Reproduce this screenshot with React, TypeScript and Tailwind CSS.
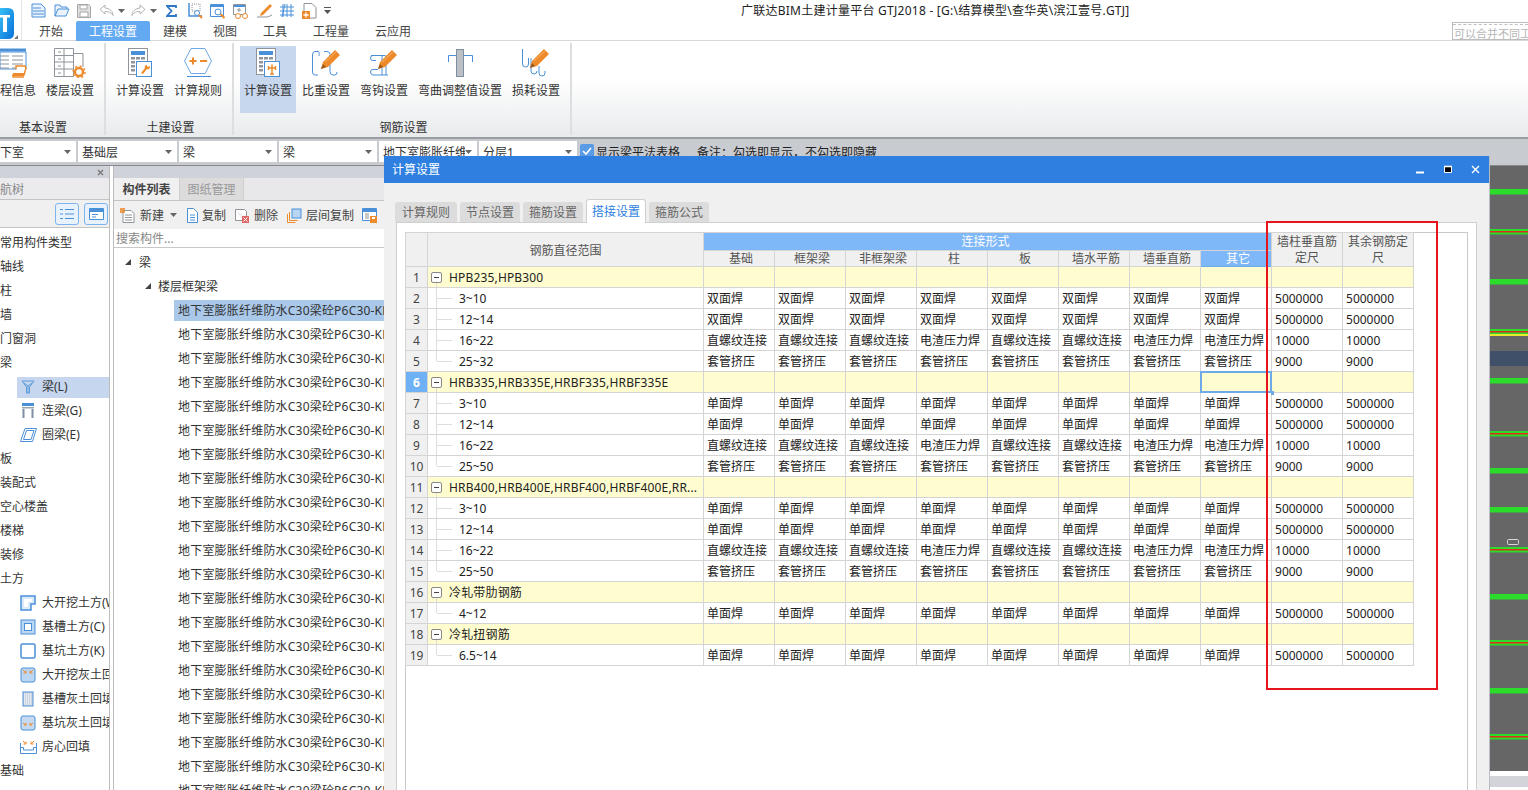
import React from "react";

const BLUE = "#4a90d9";
const ORANGE = "#ed8a2c";
const GRAY = "#8e9499";

const Svg = ({ w, h, children, className }: { w: number; h: number; children: React.ReactNode; className?: string }) => (
  <svg width={w} height={h} viewBox={`0 0 ${w} ${h}`} fill="none" className={`shrink-0 ${className ?? ""}`}>
    {children}
  </svg>
);

const Caret = ({ className }: { className?: string }) => (
  <svg width="7" height="4" viewBox="0 0 7 4" className={`shrink-0 ${className ?? ""}`}>
    <path d="M0 0h7L3.500 4z" fill="#666" />
  </svg>
);

const Pen = ({ x, y }: { x: number; y: number }) => (
  <g transform={`translate(${x} ${y})`}>
    <path d="M0 20l2-7L14 1l5 5L7 18z" fill={ORANGE} />
    <path d="M4 13L15 3" stroke="#f7b36b" strokeWidth="1" />
    <path d="M0 20l2-5 3 3z" fill="#9a5a1c" />
  </g>
);

const CalcBase = ({ children }: { children: React.ReactNode }) => (
  <Svg w={25} h={30}>
    <rect x="0.500" y="0.500" width="19" height="26" fill="#fff" stroke={GRAY} />
    <rect x="3" y="3" width="14" height="4" fill={BLUE} />
    {[9, 13, 17, 21].map((y) =>
      [3, 8, 13].map((x) => <rect key={`${x}-${y}`} x={x} y={y} width="4" height="2.500" fill={GRAY} />),
    )}
    <rect x="8.500" y="13.500" width="15" height="15" fill="#fff" stroke={BLUE} />
    {children}
  </Svg>
);

const quickIcons: React.ReactNode[] = [
  <Svg key="new" w={15} h={15} className="ml-0">
    <path d="M1 1h9l4 4v9H1zM2 5h8M2 8h11M2 11h11" stroke={BLUE} fill="#eaf3fc" />
  </Svg>,
  <Svg key="open" w={16} h={15} className="ml-2">
    <path d="M1 13V2h5l1 2h6v2M1 13l3-7h11l-3 7z" stroke={BLUE} fill="#eaf3fc" />
  </Svg>,
  <Svg key="save" w={14} h={14} className="ml-[7px]">
    <path d="M.5.500h11l2 2v11H.5z" stroke="#a6a6a6" fill="#e2e2e2" />
    <path d="M3 1h7v4H3zM3 8h8v5H3z" fill="#fff" stroke="#a6a6a6" />
  </Svg>,
  <Svg key="undo" w={15} h={13} className="ml-2">
    <path d="M6 1L1 5.500 6 10V7.500c3 0 6 .5 8 4 0-4-3-7-8-7.500z" stroke="#b0b0b0" />
  </Svg>,
  <Caret key="c1" className="ml-[4px]" />,
  <Svg key="redo" w={15} h={13} className="ml-[6px]">
    <path d="M9 1l5 4.500L9 10V7.500c-3 0-6 .5-8 4 0-4 3-7 8-7.500z" stroke="#b0b0b0" />
  </Svg>,
  <Caret key="c2" className="ml-[4px]" />,
  <Svg key="sum" w={11} h={12} className="ml-[9px]">
    <path d="M10 3V1H1l4.500 5L1 11h9V9" stroke="#2f78c4" strokeWidth="1.800" />
  </Svg>,
  <Svg key="pick" w={16} h={16} className="ml-[10px]">
    <path d="M2 0v13h13" stroke={BLUE} strokeWidth="1.500" />
    <path d="M5 1h8v7H5z" stroke={GRAY} strokeDasharray="1 1" />
    <circle cx="10" cy="10" r="2.500" stroke={BLUE} fill="#fff" />
    <path d="M12 12l3 3" stroke={ORANGE} strokeWidth="2" />
  </Svg>,
  <Svg key="view" w={16} h={16} className="ml-[7px]">
    <path d="M.5 1.500h13v12H.5z" stroke={BLUE} fill="#fff" />
    <path d="M1 2h12v2H1z" fill={BLUE} />
    <circle cx="8" cy="9" r="3" stroke={BLUE} />
    <path d="M10.500 11l4 4" stroke={ORANGE} strokeWidth="2" />
  </Svg>,
  <Svg key="glasses" w={16} h={16} className="ml-[7px]">
    <path d="M.5 1.500h12v10H.5z" stroke={GRAY} fill="#fff" />
    <path d="M1 2h11v2H1z" fill={BLUE} />
    <path d="M4 7h4M6 5v4" stroke={GRAY} />
    <circle cx="5" cy="13" r="2.500" stroke={ORANGE} fill="#fff" />
    <circle cx="12" cy="13" r="2.500" stroke={ORANGE} fill="#fff" />
  </Svg>,
  <Svg key="pen" w={16} h={15} className="ml-2">
    <path d="M4 10l9-9 2 2-9 9-3 1z" fill={ORANGE} />
    <path d="M0 14h9c2 0 4-1 6-2" stroke={GRAY} />
  </Svg>,
  <Svg key="grid" w={16} h={15} className="ml-[6px]">
    <path d="M4 1v13M8 1v13M12 1v13M1 4h14M1 8h14M1 12h14M3 14L6 1" stroke={BLUE} />
  </Svg>,
  <Svg key="add" w={15} h={16} className="ml-[7px]">
    <path d="M2 8V.5h8l4 4V15H8" stroke={GRAY} />
    <rect x="0" y="8" width="8" height="8" fill={ORANGE} />
    <path d="M4 9.500v5M1.500 12h5" stroke="#fff" strokeWidth="1.300" />
  </Svg>,
  <Svg key="more" w={7} h={7} className="ml-[7px]">
    <path d="M0 .5h7" stroke="#555" />
    <path d="M0 3h7L3.500 7z" fill="#555" />
  </Svg>,
];

const tabs = ["开始", "工程设置", "建模", "视图", "工具", "工程量", "云应用"];

const InfoIcon = () => (
  <Svg w={30} h={30}>
    <path d="M0 .5h26v3H0z" fill={BLUE} />
    <path d="M0 4h26v17H0z" fill="#fff" stroke={BLUE} />
    {[8, 12, 16, 20].map((y) => (
      <path key={y} d={`M0 ${y}h9M12 ${y}h11`} stroke={GRAY} />
    ))}
    <path d="M16 21v-3h9l1 2-2 7H13v2h11" fill="#fff" stroke={ORANGE} strokeWidth="1.500" />
    <rect x="13" y="25" width="11" height="3" fill={ORANGE} />
  </Svg>
);

const FloorIcon = () => (
  <Svg w={32} h={30}>
    <path d="M.5.500h19v28H.5zM10 .5v28M.5 7.500h19M.5 14h19M.5 21h19M4 4h3M4 11h3M4 18h3M4 25h3" stroke={GRAY} />
    <path d="M20 5.500h9V19" stroke={GRAY} />
    <circle cx="25" cy="24" r="4" stroke={ORANGE} strokeWidth="2.400" />
    <circle cx="25" cy="24" r="6" stroke={ORANGE} strokeWidth="1.400" strokeDasharray="2 2.700" />
  </Svg>
);

const HexIcon = () => (
  <Svg w={28} h={30}>
    <path d="M7 .5h14l6.500 12.500L21 25.500H7L.5 13z" fill="#fff" stroke="#6fa8e6" />
    <path d="M5.500 13h7M9 9.500v7M16 13h7" stroke={ORANGE} strokeWidth="2" />
    <path d="M3 28.500h24" stroke={BLUE} />
  </Svg>
);

const DensityIcon = () => (
  <Svg w={29} h={30}>
    <path d="M6 3.500H3Q.5 3.500.5 7v17Q.5 27 3 27h3M5 3c3 0 2 3 2 5M12 3.500h3q3 0 3 3v17q0 3.500 3 3.500h2q2 0 2-3" stroke={BLUE} />
    <Pen x={9} y={1} />
  </Svg>
);

const HookIcon = () => (
  <Svg w={29} h={30}>
    <path d="M8 7.500H3Q.5 7.500.5 10T3 12.500h3M8 21.500H3Q.5 21.500.5 24T3 27H18M1 7.500h14M12 7v20M16 7v20" stroke={BLUE} />
    <Pen x={8} y={1} />
  </Svg>
);

const BendIcon = () => (
  <Svg w={25} h={30}>
    <path d="M.5 14V7.500h24V14" stroke={BLUE} />
    <rect x="8.500" y="1.500" width="7" height="27" fill="#bcc0c4" stroke="#7d8fa3" />
  </Svg>
);

const LossIcon = () => (
  <Svg w={29} h={30}>
    <path d="M.5 1v15q0 3 3 3t3-3V10M9 10v13q0 3 3 3t3-3M17 18v7q0 3 3 3t3-3v-2" stroke={BLUE} />
    <Pen x={8} y={0} />
  </Svg>
);

const ribbonGroups = [
  {
    width: "w-[106px]",
    pad: "pl-0",
    label: "基本设置",
    labelPad: "pl-[19px]",
    center: false,
    buttons: [
      { icon: <InfoIcon />, text: "程信息", width: "w-[40px]", first: true },
      { icon: <FloorIcon />, text: "楼层设置", width: "w-[56px]" },
    ],
  },
  {
    width: "w-[128px]",
    pad: "pl-[6px]",
    label: "土建设置",
    labelPad: "pl-[3px]",
    center: true,
    buttons: [
      {
        icon: (
          <CalcBase>
            <path d="M19 17c-2 0-3 2-2 3l-4 5 2 1 4-5c2 1 3-1 3-3l-2 1-1-1z" fill={ORANGE} />
          </CalcBase>
        ),
        text: "计算设置",
        width: "w-[56px]",
      },
      { icon: <HexIcon />, text: "计算规则", width: "w-[56px]" },
    ],
  },
  {
    width: "w-[338px]",
    pad: "pl-[6px]",
    label: "钢筋设置",
    labelPad: "pl-[3px]",
    center: true,
    buttons: [
      {
        icon: (
          <CalcBase>
            <path d="M16 16.500v10M12 20h8M12.500 18v4M19.500 18v4M14 26h4" stroke={ORANGE} strokeWidth="1.500" />
          </CalcBase>
        ),
        text: "计算设置",
        width: "w-[56px]",
        active: true,
      },
      { icon: <DensityIcon />, text: "比重设置", width: "w-[56px]" },
      { icon: <HookIcon />, text: "弯钩设置", width: "w-[56px]" },
      { icon: <BendIcon />, text: "弯曲调整值设置", width: "w-[92px]" },
      { icon: <LossIcon />, text: "损耗设置", width: "w-[56px]" },
    ],
  },
];

const selects = [
  { text: "下室", w: "w-[76px]", gap: "" },
  { text: "基础层", w: "w-[99px]", gap: "ml-[2px]" },
  { text: "梁", w: "w-[98px]", gap: "ml-[2px]" },
  { text: "梁", w: "w-[98px]", gap: "ml-[2px]" },
  { text: "地下室膨胀纤维", w: "w-[98px]", gap: "ml-[2px]" },
  { text: "分层1", w: "w-[98px]", gap: "ml-[2px]" },
];

const FunnelIcon = () => (
  <Svg w={14} h={14}>
    <path d="M1 1h12L8.500 7v6h-3V7zM3 3l4 3 4-3M7 6v7" stroke="#5b9bd9" />
  </Svg>
);

const GateIcon = () => (
  <Svg w={14} h={16}>
    <rect x="1" y="0" width="12" height="3" fill={BLUE} />
    <path d="M1 4h12v1.500H1z" fill="#9aa6b2" />
    <path d="M2.500 6v9M11.500 6v9" stroke="#7d8fa3" strokeWidth="2" />
  </Svg>
);

const RingIcon = () => (
  <Svg w={17} h={14}>
    <path d="M5 .5h11.500l-4 13H.5zM6.500 2.500h7.500l-3 9H3.500z" stroke={BLUE} fill="#fff" />
  </Svg>
);

const NotchIcon = () => (
  <Svg w={16} h={16}>
    <path d="M1 1h14v8h-4v6H1z" stroke={BLUE} strokeWidth="1.500" fill="#dbe9f8" />
    <path d="M4 4h8v3H8v5H4z" fill="#fff" />
  </Svg>
);

const TrenchIcon = () => (
  <Svg w={16} h={16}>
    <rect x="1" y="1" width="14" height="14" fill="#bcd7f3" stroke={BLUE} />
    <rect x="4.500" y="4.500" width="7" height="7" fill="#fff" stroke={BLUE} />
  </Svg>
);

const PitIcon = () => (
  <Svg w={16} h={16}>
    <rect x="1" y="1" width="14" height="14" rx="1.500" fill="#fff" stroke={BLUE} strokeWidth="1.500" />
  </Svg>
);

const FillIcon = ({ low }: { low?: boolean }) => (
  <Svg w={16} h={16}>
    <rect x="1" y="1" width="14" height="14" rx="2" fill={low ? "#c5d9f0" : "#bcd7f3"} stroke={BLUE} />
    <path
      d={low ? "M3 8l3 2M6 8v2H4M13 8l-3 2M10 8v2h2" : "M3 3l3 3M6 3.500V6H3.500M13 3l-3 3M10 3.500V6h2.500"}
      stroke={ORANGE}
    />
  </Svg>
);

const HatchIcon = () => (
  <Svg w={12} h={16}>
    <rect x="1" y="1" width="10" height="14" fill="#cbd5e0" stroke={BLUE} />
    <path d="M2 3h8M2 5h8M2 7h8M2 9h8M2 11h8M2 13h8" stroke="#fff" strokeDasharray="1 1" />
  </Svg>
);

const TrayIcon = () => (
  <Svg w={17} h={14}>
    <path d="M.5 3v10.500h16V3M.5 7.500h3v2.500h10V7.500h3" stroke={BLUE} />
    <path d="M3 1l3 3M6 1.500V4H3.500M14 1l-3 3M11 1.500V4h2.500" stroke={ORANGE} />
  </Svg>
);

type NavItem = { text: string; icon?: React.ReactNode; active?: boolean };

const navItems: NavItem[] = [
  { text: "常用构件类型" },
  { text: "轴线" },
  { text: "柱" },
  { text: "墙" },
  { text: "门窗洞" },
  { text: "梁" },
  { text: "梁(L)", icon: <FunnelIcon />, active: true },
  { text: "连梁(G)", icon: <GateIcon /> },
  { text: "圈梁(E)", icon: <RingIcon /> },
  { text: "板" },
  { text: "装配式" },
  { text: "空心楼盖" },
  { text: "楼梯" },
  { text: "装修" },
  { text: "土方" },
  { text: "大开挖土方(W)", icon: <NotchIcon /> },
  { text: "基槽土方(C)", icon: <TrenchIcon /> },
  { text: "基坑土方(K)", icon: <PitIcon /> },
  { text: "大开挖灰土回填", icon: <FillIcon /> },
  { text: "基槽灰土回填", icon: <HatchIcon /> },
  { text: "基坑灰土回填", icon: <FillIcon low /> },
  { text: "房心回填", icon: <TrayIcon /> },
  { text: "基础" },
];

const Triangle = () => (
  <svg width="6" height="6" viewBox="0 0 6 6" className="shrink-0">
    <path d="M6 0v6H0z" fill="#444" />
  </svg>
);

const dialogTabs = ["计算规则", "节点设置", "箍筋设置", "搭接设置", "箍筋公式"];
const columns = ["基础", "框架梁", "非框架梁", "柱", "板", "墙水平筋", "墙垂直筋", "其它"];

const pressure = ["直螺纹连接", "直螺纹连接", "直螺纹连接", "电渣压力焊", "直螺纹连接", "直螺纹连接", "电渣压力焊", "电渣压力焊"];
const same = (text: string) => Array<string>(8).fill(text);

type Row = { label: string; group?: boolean; last?: boolean; cells?: string[]; len?: string };

const rebarRows = (weld: string, top: string): Row[] => [
  { label: "3~10", cells: same(weld), len: "5000000" },
  { label: "12~14", cells: same(weld), len: "5000000" },
  { label: "16~22", cells: pressure, len: "10000" },
  { label: top, cells: same("套管挤压"), len: "9000", last: true },
];

const rows: Row[] = [
  { label: "HPB235,HPB300", group: true },
  ...rebarRows("双面焊", "25~32"),
  { label: "HRB335,HRB335E,HRBF335,HRBF335E", group: true },
  ...rebarRows("单面焊", "25~50"),
  { label: "HRB400,HRB400E,HRBF400,HRBF400E,RR...", group: true },
  ...rebarRows("单面焊", "25~50"),
  { label: "冷轧带肋钢筋", group: true },
  { label: "4~12", cells: same("单面焊"), len: "5000000", last: true },
  { label: "冷轧扭钢筋", group: true },
  { label: "6.5~14", cells: same("单面焊"), len: "5000000", last: true },
];

const cellLine = "border border-[#d4d4d4]";

const SettingsTable = () => (
  <table className="table-fixed border-collapse w-[1008px] -ml-px -mt-px text-[12px] text-[#222]">
    <colgroup>
      <col className="w-[22px]" />
      <col className="w-[276px]" />
      {Array.from({ length: 10 }).map((_, i) => (
        <col key={i} className="w-[71px]" />
      ))}
    </colgroup>
    <thead className="text-[#555] font-normal">
      <tr className="h-[18px]">
        <th rowSpan={2} className={`${cellLine} bg-[#f0f0f0] font-normal`} />
        <th rowSpan={2} className={`${cellLine} bg-[#f0f0f0] font-normal pt-[2px] leading-[18px]`}>
          钢筋直径范围
        </th>
        <th colSpan={8} className={`${cellLine} bg-[#7fb8f8] font-normal text-white leading-[16px] pr-[4px]`}>
          连接形式
        </th>
        <th rowSpan={2} className={`${cellLine} bg-[#f0f0f0] font-normal leading-[16px] pt-px`}>
          墙柱垂直筋定尺
        </th>
        <th rowSpan={2} className={`${cellLine} bg-[#f0f0f0] font-normal leading-[16px] pt-px`}>
          其余钢筋定尺
        </th>
      </tr>
      <tr className="h-[16px]">
        {columns.map((c) => (
          <th
            key={c}
            className={`border font-normal leading-[14px] pt-px pl-[4px] ${c === "其它" ? "bg-[#7fb8f8] text-white border-[#6ea9e8]" : "bg-[#f0f0f0] border-[#d4d4d4]"}`}
          >
            {c}
          </th>
        ))}
      </tr>
    </thead>
    <tbody>
      {rows.map((row, i) => {
        const bg = row.group ? "bg-[#fffdcf]" : "bg-white";
        const current = i === 5;
        return (
          <tr key={i} className="h-[21px]">
            <td
              className={`${cellLine} p-0 pt-[2px] leading-[18px] text-center ${current ? "bg-[#6fb1f5] text-white font-bold" : "bg-[#f0f0f0] text-[#444]"}`}
            >
              {i + 1}
            </td>
            <td className={`${cellLine} ${bg} p-0 relative`}>
              {row.group ? (
                <div className="flex items-center whitespace-nowrap overflow-hidden">
                  <span className="ml-[3px] w-[11px] h-[11px] border border-[#888] rounded-[2px] flex items-center justify-center bg-white shrink-0">
                    <span className="w-[5px] h-px bg-[#444]" />
                  </span>
                  <span className="ml-[7px] pt-[2px] leading-[18px] tracking-[0.16px]">{row.label}</span>
                </div>
              ) : (
                <div className="pl-[31px] pt-[2px] leading-[18px]">{row.label}</div>
              )}
              {row.group ? (
                <span className="absolute left-[8px] top-[16px] bottom-0 w-px bg-[#dedede]" />
              ) : (
                <>
                  <span className={`absolute left-[8px] top-0 w-px bg-[#dedede] ${row.last ? "h-[10px]" : "h-full"}`} />
                  <span className="absolute left-[9px] top-[10px] w-[15px] h-px bg-[#dedede]" />
                </>
              )}
            </td>
            {Array.from({ length: 8 }).map((_, c) => (
              <td key={c} className={`${cellLine} ${bg} p-0 pl-[3px] pt-[2px] relative whitespace-nowrap overflow-visible leading-[18px]`}>
                {row.cells?.[c]}
                {current && c === 7 && (
                  <>
                    <span className="absolute -inset-px border-2 border-[#6ea9e8]" />
                    <span className="absolute -right-[3px] -bottom-[3px] w-[4px] h-[4px] bg-[#6ea9e8]" />
                  </>
                )}
              </td>
            ))}
            <td className={`${cellLine} ${bg} p-0 pl-[3px] pt-[2px] leading-[18px]`}>{row.len}</td>
            <td className={`${cellLine} ${bg} p-0 pl-[3px] pt-[2px] leading-[18px]`}>{row.len}</td>
          </tr>
        );
      })}
    </tbody>
  </table>
);

const canvasLines: { y: number; red?: boolean; yellow?: boolean }[] = [
  { y: 188 },
  { y: 228, red: true },
  { y: 278 },
  { y: 328, red: true, yellow: true },
  { y: 377 },
  { y: 430, red: true },
  { y: 467 },
  { y: 506 },
  { y: 546, red: true },
  { y: 593 },
  { y: 639, red: true },
  { y: 687 },
  { y: 733, red: true },
];

const DrawingCanvas = () => (
  <svg width="39" height="605" viewBox="0 165 39 605" className="block">
    <rect x="0" y="165" width="39" height="605" fill="#666" />
    <rect x="0" y="350" width="39" height="15" fill="#3f5068" />
    {canvasLines.map((l) => (
      <g key={l.y}>
        <rect x="0" y={l.y} width="39" height="5.500" fill="#2bdc2b" />
        {l.red && <rect x="0" y={l.y + 2} width="39" height="1.500" fill="#e02a1c" />}
        {l.yellow && <rect x="0" y={l.y + 5} width="39" height="2" fill="#e8e82c" />}
      </g>
    ))}
    <rect x="18.500" y="538.500" width="11" height="5" rx="1" stroke="#d8d8d8" fill="none" />
  </svg>
);

export default function App() {
  return (
    <div className="relative w-[1528px] h-[790px] overflow-hidden bg-white flex flex-col text-[12px] text-[#333] font-['Noto_Sans','Noto_Sans_CJK_SC',sans-serif]">
      {/* title + tabs */}
      <div className="h-[41px] flex border-b border-[#d8d8d8] shrink-0">
        <div className="w-[22px] border-r border-[#e4e4e4] relative shrink-0">
          <svg width="14" height="31" viewBox="0 0 14 31" className="mt-2 block">
            <defs>
              <linearGradient id="logo" x1="0" y1="0" x2="1" y2="1">
                <stop offset="0" stopColor="#35c0f5" />
                <stop offset="1" stopColor="#0a6fd8" />
              </linearGradient>
            </defs>
            <path d="M0 0h8q6 0 6 6v19q0 6-6 6H0z" fill="url(#logo)" />
            <path d="M0 7h10v2.500H7V24H3V9.500H0z" fill="#fff" />
          </svg>
          <svg width="4" height="4" viewBox="0 0 4 4" className="absolute left-[14px] top-[35px]">
            <path d="M4 0v4H0z" fill="#777" />
          </svg>
        </div>
        <div className="flex-1 flex flex-col min-w-0">
          <div className="h-[21px] flex items-center shrink-0">
            <div className="w-[719px] pl-[9px] flex items-center shrink-0">{quickIcons}</div>
            <span className="text-[#222] whitespace-nowrap leading-[20px] tracking-[0.25px]">
              广联达BIM土建计量平台 GTJ2018 - [G:\结算模型\查华英\滨江壹号.GTJ]
            </span>
          </div>
          <div className="flex-1 flex items-stretch pl-[4px]">
            {tabs.map((t) => (
              <div
                key={t}
                className={`px-[13px] pt-[2px] flex items-center rounded-t-[2px] ${t === "工程设置" ? "bg-[#63a9f2] text-white" : "text-[#444]"}`}
              >
                {t}
              </div>
            ))}
            <div className="ml-auto mt-px w-[76px] h-[18px] border-l border-t border-b border-[#bdbdbd] overflow-hidden flex flex-col">
              <span className="h-[2px] mt-px shrink-0 border-t border-dashed border-[#c0c0c0]" />
              <span className="whitespace-nowrap text-[11px] leading-[14px] mt-px text-[#b5b5b5] pl-px">可以合并不同工程</span>
            </div>
          </div>
        </div>
      </div>

      {/* ribbon */}
      <div className="h-[98px] shrink-0 flex items-start pt-[2px] border-b-2 border-[#9a9ea3] bg-linear-to-b from-white from-40% to-[#e8eaec]">
        {ribbonGroups.map((g) => (
          <div key={g.label} className={`${g.width} h-[92px] border-r-2 border-[#dcdee0] flex flex-col shrink-0`}>
            <div className={`flex gap-[2px] pt-[3px] h-[70px] ${g.pad}`}>
              {g.buttons.map((b, i) => (
                <div
                  key={i}
                  className={`${b.width} h-[67px] pt-[2px] flex flex-col shrink-0 ${"first" in b ? "items-start" : "items-center"} ${"active" in b ? "bg-[#c7d7ee]" : ""}`}
                >
                  <div className="h-[30px] flex items-start overflow-hidden">{b.icon}</div>
                  <div className="mt-[4px] leading-[18px] whitespace-nowrap text-[#333]">{b.text}</div>
                </div>
              ))}
            </div>
            <div className={`mt-[6px] leading-[18px] whitespace-nowrap ${g.center ? "text-center" : ""} ${g.labelPad}`}>{g.label}</div>
          </div>
        ))}
      </div>

      {/* floor / type selectors */}
      <div className="h-[26px] shrink-0 bg-[#c8cbd0] flex items-start pt-[2px]">
        {selects.map((s, i) => (
          <div key={i} className={`${s.w} ${s.gap} h-[21px] bg-white flex items-center pl-[4px] pr-[5px] shrink-0 overflow-hidden`}>
            <span className={`whitespace-nowrap overflow-hidden pt-[2px] ${i === 0 ? "-ml-[4px]" : ""}`}>{s.text}</span>
            <Caret className="ml-auto" />
          </div>
        ))}
        <span className="ml-[3px] mt-[3px] w-[14px] h-[14px] bg-[#5a9be6] rounded-[2px] flex items-center justify-center shrink-0">
          <svg width="10" height="8" viewBox="0 0 10 8">
            <path d="M1 4l3 3 5-6" stroke="#fff" strokeWidth="1.600" fill="none" />
          </svg>
        </span>
        <span className="ml-[2px] leading-[24px] whitespace-nowrap text-[#222]">显示梁平法表格</span>
        <span className="ml-[17px] leading-[24px] whitespace-nowrap text-[#222]">备注：勾选即显示，不勾选即隐藏</span>
      </div>

      {/* main area */}
      <div className="flex-1 min-h-0 flex border-t border-[#85888d]">
        {/* navigation tree */}
        <div className="w-[110px] shrink-0 border-r border-[#bdbdbd] overflow-hidden flex flex-col">
          <div className="h-[12px] bg-[#cfd2d8] flex justify-end items-center pr-[5px] shrink-0">
            <svg width="7" height="7" viewBox="0 0 7 7">
              <path d="M1 1l5 5M6 1L1 6" stroke="#777" strokeWidth="1.300" />
            </svg>
          </div>
          <div className="h-[22px] bg-[#ebebee] border-b border-[#c4c4c4] text-[#888] leading-[23px] shrink-0">航树</div>
          <div className="h-[28px] bg-[#f0f0f0] border-b border-[#c4c4c4] flex items-center justify-end gap-[5px] pr-[1px] shrink-0">
            <span className="w-[24px] h-[22px] border border-[#7db4ee] rounded-[3px] bg-[#e8f2fc] flex items-center justify-center">
              <svg width="14" height="12" viewBox="0 0 14 12">
                <path d="M0 1.500h3M5 1.500h9M0 6h3M5 6h9M0 10.500h3M5 10.500h9" stroke={BLUE} />
              </svg>
            </span>
            <span className="w-[24px] h-[22px] border border-[#7db4ee] rounded-[3px] bg-[#e8f2fc] flex items-center justify-center">
              <svg width="15" height="12" viewBox="0 0 15 12">
                <path d="M.5 .5h14v11H.5z" stroke={BLUE} fill="#fff" />
                <path d="M1 1h13v3H1zM3 6h6v1H3zM3 8.500h4v1H3z" fill={BLUE} />
              </svg>
            </span>
          </div>
          <div className="pt-[3px]">
            {navItems.map((n) => (
              <div key={n.text} className="h-[24px] flex items-center whitespace-nowrap">
                {n.icon ? (
                  <div className={`ml-[17px] h-[21px] flex-1 flex items-center ${n.active ? "bg-[#c5d6ee]" : ""}`}>
                    <span className="w-[25px] flex justify-center shrink-0 pr-[3px]">{n.icon}</span>
                    <span>{n.text}</span>
                  </div>
                ) : (
                  n.text
                )}
              </div>
            ))}
          </div>
        </div>

        <div className="w-[4px] shrink-0 border-r border-[#bdbdbd]" />

        {/* component list, mostly behind the dialog */}
        <div className="flex-1 min-w-0 flex flex-col overflow-hidden">
          <div className="h-[12px] bg-[#cfd2d8] shrink-0" />
          <div className="h-[23px] bg-[#e8e8ea] border-b border-[#c4c4c4] flex shrink-0">
            <span className="w-[65px] bg-[#f0f0f0] text-center font-bold leading-[24px] text-[#444]">构件列表</span>
            <span className="w-[65px] bg-[#dcdcdc] text-center leading-[24px] text-[#999] border-x border-[#cfcfcf]">图纸管理</span>
          </div>
          <div className="h-[28px] bg-[#f0f0f0] flex items-center pl-[6px] shrink-0 text-[#444] whitespace-nowrap">
            <Svg w={15} h={15}>
              <path d="M3 2.500h8l3 3v9H3zM5 7h7M5 9.500h7M5 12h7" stroke={GRAY} fill="#fff" />
              <rect x="0" y="0" width="5" height="5" fill={ORANGE} opacity="0.800" />
            </Svg>
            <span className="ml-[5px] pt-[2px]">新建</span>
            <Caret className="ml-[6px]" />
            <Svg w={13} h={15} className="ml-[8px]">
              <path d="M2.500 3V.5h6l4 4V14.500H2.500zM5 7h5M5 9.500h5M5 12h5" stroke={BLUE} fill="#fff" />
            </Svg>
            <span className="ml-[4px] pt-[2px]">复制</span>
            <Svg w={15} h={15} className="ml-[9px]">
              <path d="M.5 1.500h9l2 2v6M.5 1.500v11h7" stroke={GRAY} fill="#fff" />
              <rect x="7" y="8" width="7" height="7" fill="#e06666" />
              <path d="M8.500 9.500l4 4M12.500 9.500l-4 4" stroke="#fff" />
            </Svg>
            <span className="ml-[4px] pt-[2px]">删除</span>
            <Svg w={15} h={15} className="ml-[9px]">
              <path d="M.5 6v8.500h8" stroke={ORANGE} />
              <path d="M2.500 4v8.500h8" stroke={ORANGE} />
              <rect x="5" y="1" width="9" height="9" fill="#b9d5f4" stroke={BLUE} />
            </Svg>
            <span className="ml-[4px] pt-[2px]">层间复制</span>
            <Svg w={16} h={15} className="ml-[8px]">
              <path d="M.5 .5h14v12H.5z" stroke={BLUE} fill="#fff" />
              <path d="M1 1h13v3H1z" fill={BLUE} />
              <path d="M3 6h4M3 8h4M3 10h4" stroke={GRAY} />
              <rect x="8" y="8" width="7" height="7" fill={ORANGE} />
              <rect x="10" y="9" width="3" height="2" fill="#fff" />
            </Svg>
          </div>
          <div className="h-[19px] bg-white border-b border-[#c8c8c8] pl-[2px] text-[#888] leading-[20px] shrink-0">搜索构件...</div>
          <div className="pt-[2px] text-[#333] whitespace-nowrap">
            <div className="h-[24px] flex items-center pl-[11px] gap-[8px]">
              <Triangle />
              <span className="pt-[2px]">梁</span>
            </div>
            <div className="h-[24px] flex items-center pl-[31px] gap-[7px]">
              <Triangle />
              <span className="pt-[2px]">楼层框架梁</span>
            </div>
            {Array.from({ length: 21 }).map((_, i) => (
              <div key={i} className="h-[24px] flex items-center pl-[60px]">
                <div className={`h-[21px] flex-1 pl-[4px] leading-[21px] tracking-[0.2px] ${i === 0 ? "bg-[#a9c8ea]" : ""}`}>
                  地下室膨胀纤维防水C30梁砼P6C30-KL{i + 1}
                </div>
              </div>
            ))}
          </div>
        </div>

        {/* model canvas at the right edge */}
        <div className="w-[39px] shrink-0 flex flex-col bg-white">
          <DrawingCanvas />
          <div className="h-[5px]" />
          <div className="h-[11px] bg-[#d2d4da]" />
        </div>
      </div>

      {/* settings dialog */}
      <div className="absolute left-[384px] top-[156px] w-[1106px] h-[634px] bg-[#f0f0f0] border-r border-[#b8bcc4] flex flex-col">
        <div className="h-[27px] bg-[#2e7fe0] flex items-center pl-[8px] text-white shrink-0">
          <span>计算设置</span>
          <svg width="68" height="10" viewBox="0 0 68 10" className="ml-auto mr-[5px]">
            <path d="M0 7.500h8" stroke="#fff" strokeWidth="2" />
            <path d="M28.500 1.500h7v6h-7z" stroke="#fff" strokeWidth="1" />
            <path d="M28 1.500h8" stroke="#fff" strokeWidth="1.600" />
            <path d="M56 1l7 7M63 1l-7 7" stroke="#fff" strokeWidth="1.400" />
          </svg>
        </div>
        <div className="h-[39px] flex items-end pl-[11px] gap-[3px] shrink-0">
          {dialogTabs.map((t, i) => (
            <div
              key={t}
              className={
                t === "搭接设置"
                  ? "h-[24px] -mb-px z-10 px-[5px] bg-white border border-b-0 border-[#cfcfcf] rounded-t-[3px] text-[#2e7fe0] leading-[24px]"
                  : `h-[20px] ${i === 0 ? "pl-[7px] pr-[7px]" : "px-[6px]"} bg-[#dcdcdc] rounded-t-[3px] text-[#666] leading-[22px]`
              }
            >
              {t}
            </div>
          ))}
        </div>
        <div className="flex-1 min-h-0 ml-[12px] w-[1081px] bg-white border border-b-0 border-[#cfcfcf] pt-[9px] pl-[8px]">
          <div className="w-[1063px] h-full border border-b-0 border-[#c8c8c8]">
            <SettingsTable />
          </div>
        </div>
        {/* red annotation box */}
        <div className="absolute left-[882px] top-[65px] w-[172px] h-[469px] border-2 border-[#e8141c] pointer-events-none" />
      </div>
    </div>
  );
}
